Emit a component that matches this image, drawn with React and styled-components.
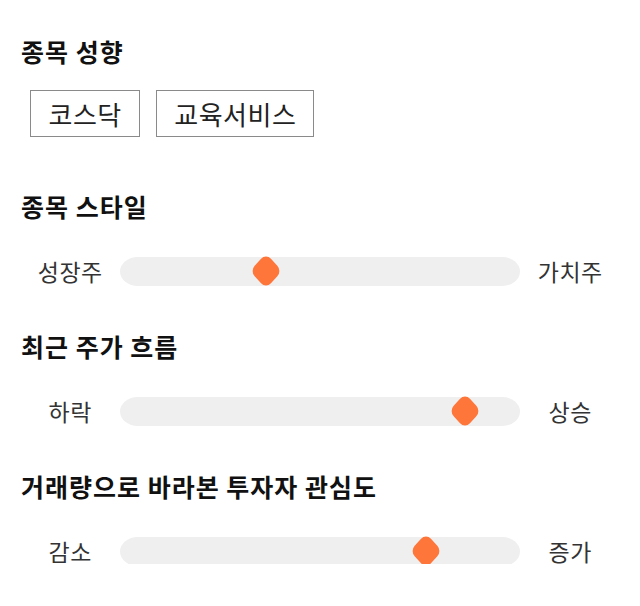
import React from 'react';
import styled, { createGlobalStyle } from 'styled-components';

const GlobalStyle = createGlobalStyle`
  * { box-sizing: border-box; }
  body {
    margin: 0;
    background: #ffffff;
    font-family: "Noto Sans CJK KR", "Noto Sans", sans-serif;
    color: #222;
  }
`;

const tags = ['코스닥', '교육서비스'];

const sliders = [
  { title: '종목 스타일', left: '성장주', right: '가치주', value: 0.355 },
  { title: '최근 주가 흐름', left: '하락', right: '상승', value: 0.89 },
  { title: '거래량으로 바라본 투자자 관심도', left: '감소', right: '증가', value: 0.785 },
];

const App = () => (
  <>
    <GlobalStyle />
    <Page>
      <Section>
        <Title>종목 성향</Title>
        <TagList>
          {tags.map((t) => (
            <Tag key={t}>{t}</Tag>
          ))}
        </TagList>
      </Section>
      {sliders.map((s) => (
        <Section key={s.title}>
          <Title>{s.title}</Title>
          <SliderRow>
            <EndLabel>{s.left}</EndLabel>
            <Track>
              <Thumb style={{ left: `calc(14px + (100% - 28px) * ${s.value})` }} />
            </Track>
            <EndLabel>{s.right}</EndLabel>
          </SliderRow>
        </Section>
      ))}
    </Page>
  </>
);

const Page = styled.div`
  padding: 36px 20px 0;
  display: flex;
  flex-direction: column;
  gap: 47px;
`;

const Section = styled.section`
  display: flex;
  flex-direction: column;
  gap: 33px;

  &:first-child {
    gap: 24px;
  }
  &:first-child + & {
    margin-top: 7px;
  }
`;

const Title = styled.h2`
  margin: 0;
  padding-left: 1px;
  height: 30px;
  line-height: 30px;
  font-size: 25px;
  font-weight: 700;
  letter-spacing: 1px;
  color: #111;
`;

const TagList = styled.div`
  display: flex;
  gap: 16px;
  padding-left: 10px;
`;

const Tag = styled.span`
  height: 47px;
  display: flex;
  align-items: center;
  padding: 0 17px 0 17.5px;
  border: 1px solid #8a8a8a;
  font-size: 26px;
  letter-spacing: 0.5px;
  color: #222;
`;

const SliderRow = styled.div`
  display: grid;
  grid-template-columns: 100px 1fr 100px;
  align-items: center;
  height: 30px;
`;

const EndLabel = styled.span`
  text-align: center;
  padding-left: 0.5px;
  font-size: 23px;
  letter-spacing: 0.5px;
  color: #333;
`;

const Track = styled.div`
  position: relative;
  height: 29px;
  background: #efefef;
  border-radius: 18px / 50%;
`;

const Thumb = styled.span`
  position: absolute;
  top: 50%;
  width: 23px;
  height: 23px;
  background: #ff763b;
  border-radius: 7px;
  transform: translate(-50%, -50%) scale(1, 1.08) rotate(45deg);
`;

export default App;
